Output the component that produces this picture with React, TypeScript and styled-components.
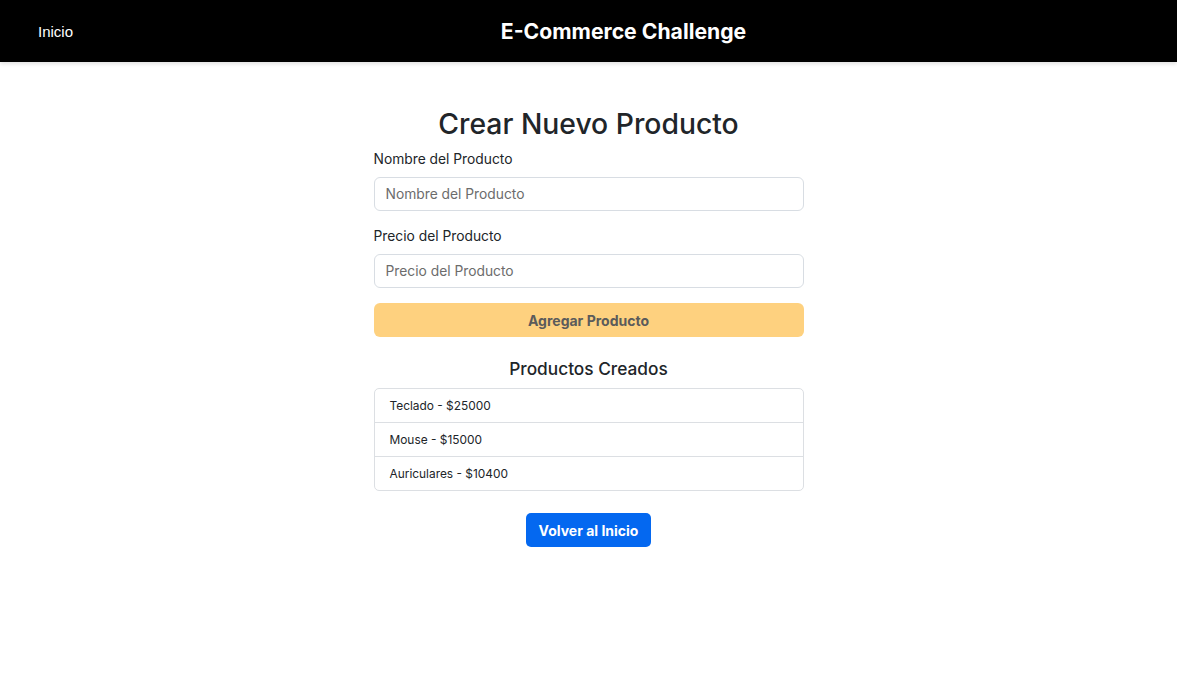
import React from "react";
import styled, { createGlobalStyle } from "styled-components";

const Global = createGlobalStyle`
  html, body { margin: 0; padding: 0; background: #fff; }
  body { font-family: "Inter", "Open Sans", sans-serif; color: #212529; }
  * { box-sizing: border-box; }
`;

const NavBar = styled.header`
  height: 62px;
  background: #000;
  display: flex;
  align-items: center;
  padding: 0 38px;
  box-shadow: 0 2px 4px rgba(0, 0, 0, 0.12);
`;

const NavLink = styled.a`
  color: #fff;
  font-family: "Liberation Sans", Arial, sans-serif;
  font-size: 15px;
  text-decoration: none;
  cursor: pointer;
`;

const Brand = styled.h1`
  flex: 1;
  margin: 0;
  padding-left: 35px;
  text-align: center;
  color: #fff;
  font-size: 21.2px;
  font-weight: 700;
`;

const Main = styled.main`
  width: 430px;
  margin: 0 auto;
  padding-top: 44px;
  display: flex;
  flex-direction: column;
`;

const Title = styled.h2`
  margin: 0 0 7px;
  text-align: center;
  font-size: 28.3px;
  font-weight: 500;
  line-height: 36px;
`;

const Label = styled.label`
  font-size: 13.8px;
  line-height: 20px;
  margin-bottom: 8px;
`;

const Input = styled.input`
  height: 34px;
  border: 1px solid #d8dde3;
  border-radius: 6px;
  padding: 0 11px;
  font-family: inherit;
  font-size: 13.8px;
  margin-bottom: 15px;
  &::placeholder { color: #6c6c6c; }
`;

const Button = styled.button<{ $variant: "warning" | "primary" }>`
  height: 34px;
  border: none;
  border-radius: ${(p) => (p.$variant === "warning" ? "6px" : "5px")};
  font-family: inherit;
  font-weight: 700;
  font-size: 14px;
  background: ${(p) => (p.$variant === "warning" ? "#fed17f" : "#0468f0")};
  color: ${(p) => (p.$variant === "warning" ? "#5b5b5b" : "#fff")};
  padding: 0 13px;
  cursor: pointer;
`;

const SubTitle = styled.h3`
  margin: 21px 0 8px;
  text-align: center;
  font-size: 17.3px;
  font-weight: 500;
  line-height: 22px;
`;

const List = styled.ul`
  list-style: none;
  margin: 0;
  padding: 0;
  border: 1px solid #dcdfe3;
  border-radius: 5px;
`;

const Item = styled.li`
  height: 33px;
  display: flex;
  align-items: center;
  padding: 0 15px;
  font-size: 11.9px;
  & + & { border-top: 1px solid #dcdfe3; height: 34px; }
`;

const Footer = styled.div`
  display: flex;
  justify-content: center;
  margin-top: 22px;
`;

const products = [
  { name: "Teclado", price: 25000 },
  { name: "Mouse", price: 15000 },
  { name: "Auriculares", price: 10400 },
];

export default function App() {
  return (
    <>
      <Global />
      <NavBar>
        <NavLink>Inicio</NavLink>
        <Brand>E-Commerce Challenge</Brand>
      </NavBar>
      <Main>
        <Title>Crear Nuevo Producto</Title>
        <Label>Nombre del Producto</Label>
        <Input placeholder="Nombre del Producto" />
        <Label>Precio del Producto</Label>
        <Input placeholder="Precio del Producto" />
        <Button $variant="warning">Agregar Producto</Button>
        <SubTitle>Productos Creados</SubTitle>
        <List>
          {products.map((p) => (
            <Item key={p.name}>
              {p.name} - ${p.price}
            </Item>
          ))}
        </List>
        <Footer>
          <Button $variant="primary">Volver al Inicio</Button>
        </Footer>
      </Main>
    </>
  );
}
